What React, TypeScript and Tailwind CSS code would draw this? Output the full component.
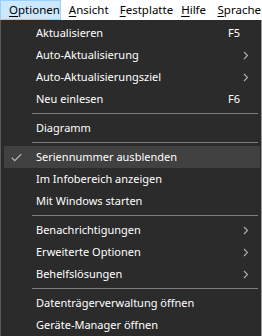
import React from "react";

type Item =
  | { kind: "item"; label: string; shortcut?: string; sub?: boolean; checked?: boolean; hover?: boolean }
  | { kind: "sep" };

const items: Item[] = [
  { kind: "item", label: "Aktualisieren", shortcut: "F5" },
  { kind: "item", label: "Auto-Aktualisierung", sub: true },
  { kind: "item", label: "Auto-Aktualisierungsziel", sub: true },
  { kind: "item", label: "Neu einlesen", shortcut: "F6" },
  { kind: "sep" },
  { kind: "item", label: "Diagramm" },
  { kind: "sep" },
  { kind: "item", label: "Seriennummer ausblenden", checked: true, hover: true },
  { kind: "item", label: "Im Infobereich anzeigen" },
  { kind: "item", label: "Mit Windows starten" },
  { kind: "sep" },
  { kind: "item", label: "Benachrichtigungen", sub: true },
  { kind: "item", label: "Erweiterte Optionen", sub: true },
  { kind: "item", label: "Behelfslösungen", sub: true },
  { kind: "sep" },
  { kind: "item", label: "Datenträgerverwaltung öffnen" },
  { kind: "item", label: "Geräte-Manager öffnen" },
];

function Chevron() {
  return (
    <svg width="6" height="9" viewBox="0 0 6 9" className="ml-[15px]">
      <polyline points="1,1 4.5,4.5 1,8" fill="none" stroke="#b0b0b0" strokeWidth="1.1" />
    </svg>
  );
}

function Check() {
  return (
    <svg width="11" height="9" viewBox="0 0 11 9" className="ml-[7px]">
      <polyline points="0.8,4.6 3.8,7.6 10.2,1.2" fill="none" stroke="#bdbdbd" strokeWidth="1.2" />
    </svg>
  );
}

function MenuBarItem({ label, width, pl, active }: { label: string; width?: string; pl: string; active?: boolean }) {
  const first = label.charAt(0);
  const rest = label.slice(1);
  return (
    <div
      className={`h-[20px] flex items-center ${width ?? ""} ${pl} ${
        active ? "bg-[#cce8ff] border border-[#99d1ff]" : "border border-transparent"
      }`}
    >
      <span className="text-[11.5px] leading-[18px] text-black whitespace-nowrap">
        <span className="underline underline-offset-[2px]">{first}</span>
        {rest}
      </span>
    </div>
  );
}

export default function App() {
  return (
    <div
      className="w-[262px] h-[336px] overflow-hidden bg-white"
      style={{ fontFamily: '"Noto Sans", "Open Sans", sans-serif' }}
    >
      <div className="flex h-[20px] bg-white">
        <MenuBarItem label="Optionen" width="w-[64px]" pl="pl-[8px]" active />
        <MenuBarItem label="Ansicht" width="w-[56px]" pl="pl-[7px]" />
        <MenuBarItem label="Festplatte" width="w-[65px]" pl="pl-[6px]" />
        <MenuBarItem label="Hilfe" width="w-[38px]" pl="pl-[6px]" />
        <MenuBarItem label="Sprache" pl="pl-[7px]" />
      </div>
      <div className="h-[316px] bg-[#2b2b2b] border-l border-l-[#5a5a5a] border-r border-r-[#9a9a9a] pt-[2px]">
        {items.map((it, i) =>
          it.kind === "sep" ? (
            <div key={i} className="h-[7px] flex items-center pl-[31px] pr-[3px]">
              <div className="h-px w-full bg-[#7d7d7d]" />
            </div>
          ) : (
            <div
              key={i}
              className={`h-[22px] ml-[3px] mr-[1px] flex items-center ${it.hover ? "bg-[#414141]" : ""}`}
            >
              <div className="w-[32px] flex items-center">{it.checked ? <Check /> : null}</div>
              <div className="flex-1 text-[11px] leading-[22px] text-white whitespace-nowrap">{it.label}</div>
              <div className="w-[32px] flex items-center text-[11px] leading-[22px] text-white pr-[2px]">
                {it.shortcut ? <span>{it.shortcut}</span> : it.sub ? <Chevron /> : null}
              </div>
            </div>
          )
        )}
      </div>
    </div>
  );
}
